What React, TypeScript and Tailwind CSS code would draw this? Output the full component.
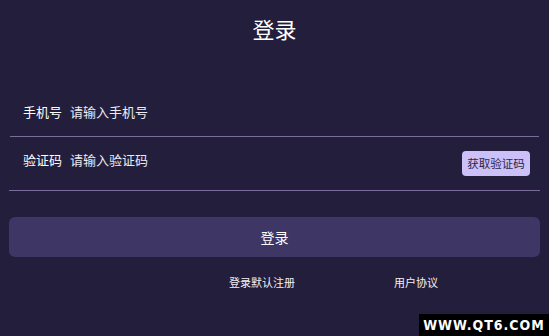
import React from 'react'

const font = { fontFamily: '"Noto Sans CJK SC", "Noto Sans", sans-serif' }

export default function App() {
  return (
    <div
      className="relative flex h-[336px] w-[549px] flex-col overflow-hidden bg-[#221e3b] text-white"
      style={font}
    >
      <div className="flex h-[56px] items-center justify-center text-[22px] leading-none">登录</div>

      <div className="mt-[32px] mx-[10px] flex h-[49px] items-center border-b border-[#7a6d9c] px-[13px] text-[13px]">
        <span className="mr-[8px]">手机号</span>
        <span className="text-[#ecebf3]">请输入手机号</span>
      </div>

      <div className="mx-[9px] flex h-[54px] items-center justify-between border-b border-[#7a6d9c] pl-[14px] pr-[10px] text-[13px]">
        <div className="mb-[7px] flex">
          <span className="mr-[8px]">验证码</span>
          <span className="text-[#ecebf3]">请输入验证码</span>
        </div>
        <button className="flex h-[25px] w-[68px] items-center justify-center rounded-[4px] bg-[#cbc0f8] text-[11.5px] text-[#2b2648]">
          获取验证码
        </button>
      </div>

      <button className="mx-[9px] mt-[26px] flex h-[40px] items-center justify-center rounded-[6px] bg-[#3e3665] text-[14px]">
        登录
      </button>

      <div className="mt-[17px] flex justify-end gap-[99px] pr-[111px] text-[11px] text-[#f2f1f7]">
        <span>登录默认注册</span>
        <span>用户协议</span>
      </div>

      <div
        className="absolute bottom-0 right-0 flex h-[22px] w-[130px] items-center justify-center bg-black text-[14px] font-bold tracking-[1px] text-white"
        style={{ fontFamily: '"DejaVu Sans Condensed", "Liberation Sans Narrow", sans-serif' }}
      >
        WWW.QT6.COM
      </div>
    </div>
  )
}
